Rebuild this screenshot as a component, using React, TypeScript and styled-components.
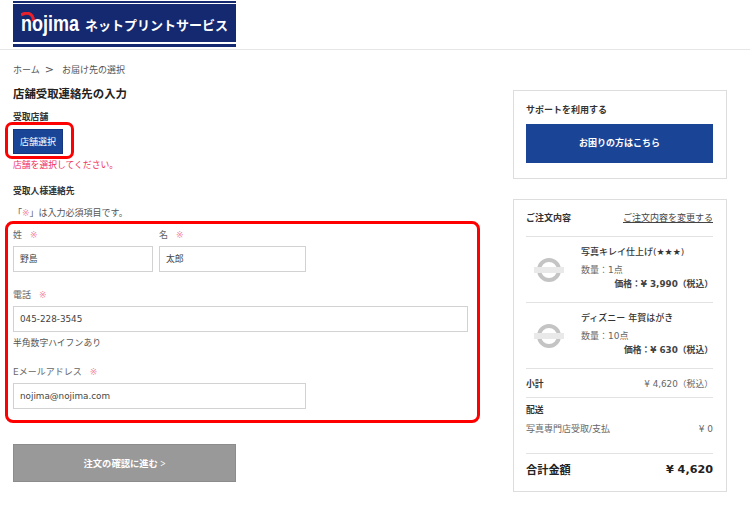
import React from 'react';
import styled, { createGlobalStyle } from 'styled-components';

const SANS = `'DejaVu Sans', 'Noto Sans CJK JP', sans-serif`;

const GlobalStyle = createGlobalStyle`
  html, body {
    margin: 0;
    padding: 0;
    background: #fff;
  }
  body {
    font-family: ${SANS};
    color: #444;
  }
  * {
    box-sizing: border-box;
  }
`;

interface IOrderItem {
  name: string;
  quantity: string;
  price: string;
}

const items: IOrderItem[] = [
  { name: '写真キレイ仕上げ(★★★)', quantity: '数量：1点', price: '価格：¥ 3,990（税込）' },
  { name: 'ディズニー 年賀はがき', quantity: '数量：10点', price: '価格：¥ 630（税込）' },
];

function NoImage() {
  return (
    <svg width="32" height="26" viewBox="0 0 32 26">
      <circle cx="16" cy="13" r="10" fill="none" stroke="#c4c4c4" strokeWidth="4" />
      <rect x="1" y="10" width="30" height="6" fill="#e9e9e9" />
    </svg>
  );
}

function Logo() {
  return (
    <LogoBox>
      <LogoMark>
        <svg width="15" height="10" viewBox="0 0 15 10">
          <path d="M0 3 C5 0 12 0 12.5 9" fill="none" stroke="#e8202a" strokeWidth="3" />
        </svg>
      </LogoMark>
      <LogoName>nojima</LogoName>
      <LogoService>ネットプリントサービス</LogoService>
    </LogoBox>
  );
}

export default function App() {
  return (
    <>
      <GlobalStyle />
      <Header>
        <Logo />
      </Header>
      <Page>
        <Main>
          <Breadcrumb>
            <span>ホーム</span>
            <BreadcrumbSep>&gt;</BreadcrumbSep>
            <span>お届け先の選択</span>
          </Breadcrumb>
          <PageTitle>店舗受取連絡先の入力</PageTitle>
          <SectionTitle>受取店舗</SectionTitle>
          <StoreButtonWrap>
            <StoreButton>店舗選択</StoreButton>
          </StoreButtonWrap>
          <ErrorText>店舗を選択してください。</ErrorText>
          <ContactTitle>受取人様連絡先</ContactTitle>
          <Notice>
            「<Required>※</Required>」は入力必須項目です。
          </Notice>
          <FormArea>
            <NameRow>
              <Field>
                <FieldLabel>
                  姓<Required>※</Required>
                </FieldLabel>
                <TextBox $width={140}>野島</TextBox>
              </Field>
              <Field>
                <FieldLabel>
                  名<Required>※</Required>
                </FieldLabel>
                <TextBox $width={147}>太郎</TextBox>
              </Field>
            </NameRow>
            <Field>
              <FieldLabel>
                電話<Required>※</Required>
              </FieldLabel>
              <TextBox $width={455}>045-228-3545</TextBox>
              <Hint>半角数字ハイフンあり</Hint>
            </Field>
            <EmailField>
              <FieldLabel>
                Eメールアドレス<Required>※</Required>
              </FieldLabel>
              <TextBox $width={293}>nojima@nojima.com</TextBox>
            </EmailField>
          </FormArea>
          <NextButton>注文の確認に進む &gt;</NextButton>
        </Main>
        <Side>
          <SupportCard>
            <SupportTitle>サポートを利用する</SupportTitle>
            <SupportButton>お困りの方はこちら</SupportButton>
          </SupportCard>
          <OrderCard>
            <OrderHead>
              <OrderHeadTitle>ご注文内容</OrderHeadTitle>
              <ChangeLink>ご注文内容を変更する</ChangeLink>
            </OrderHead>
            {items.map((item) => (
              <ItemRow key={item.name}>
                <ItemThumb>
                  <NoImage />
                </ItemThumb>
                <ItemBody>
                  <ItemName>{item.name}</ItemName>
                  <ItemQuantity>{item.quantity}</ItemQuantity>
                  <ItemPrice>{item.price}</ItemPrice>
                </ItemBody>
              </ItemRow>
            ))}
            <SubtotalRow>
              <SummaryLabel>小計</SummaryLabel>
              <span>¥ 4,620（税込）</span>
            </SubtotalRow>
            <ShippingBlock>
              <SummaryLabel>配送</SummaryLabel>
              <ShippingRow>
                <span>写真専門店受取/支払</span>
                <span>¥ 0</span>
              </ShippingRow>
            </ShippingBlock>
            <TotalRow>
              <span>合計金額</span>
              <span>¥ 4,620</span>
            </TotalRow>
          </OrderCard>
        </Side>
      </Page>
    </>
  );
}

const Header = styled.header`
  height: 50px;
  padding: 1px 0 0 13px;
  border-bottom: 1px solid #e6e6e6;
`;

const LogoBox = styled.div`
  position: relative;
  display: flex;
  align-items: center;
  width: 223px;
  height: 46px;
  padding-left: 8px;
  background: linear-gradient(
    #14296f 0 2px,
    #fff 2px 3px,
    #14296f 3px 41px,
    #fff 41px 43px,
    #14296f 43px
  );
  color: #fff;
`;

const LogoMark = styled.span`
  position: absolute;
  left: 8px;
  top: 11px;
  line-height: 0;
`;

const LogoName = styled.span`
  display: inline-block;
  width: 64px;
  font-family: 'Liberation Sans', sans-serif;
  font-size: 18px;
  font-weight: 700;
  transform: scaleY(1.2);
`;

const LogoService = styled.span`
  font-family: 'Noto Sans CJK JP', sans-serif;
  font-size: 13px;
  font-weight: 700;
  white-space: nowrap;
`;

const Page = styled.div`
  display: flex;
  justify-content: space-between;
  padding: 0 23px 0 13px;
`;

const Main = styled.main`
  width: 455px;
`;

const Breadcrumb = styled.nav`
  display: flex;
  align-items: center;
  height: 14px;
  margin-top: 12px;
  font-size: 9px;
  color: #555;
`;

const BreadcrumbSep = styled.span`
  margin: 0 8px 0 5px;
  font-size: 11px;
`;

const PageTitle = styled.h1`
  height: 16px;
  margin: 10px 0 0;
  font-size: 11.4px;
  line-height: 16px;
  font-weight: 700;
  color: #222;
`;

const SectionTitle = styled.h2`
  height: 12px;
  margin: 9px 0 0;
  font-size: 8.8px;
  line-height: 12px;
  font-weight: 700;
  color: #333;
`;

const StoreButtonWrap = styled.div`
  position: relative;
  width: 50px;
  margin-top: 6px;

  &::before {
    content: '';
    position: absolute;
    inset: -7px -11px -5px -8px;
    border: 3px solid #ff0000;
    border-radius: 7px;
  }
`;

const StoreButton = styled.button`
  display: block;
  width: 50px;
  height: 25px;
  padding: 0;
  border: 1px solid #15367f;
  background: #1a4597;
  color: #fff;
  font-family: ${SANS};
  font-size: 9px;
`;

const ErrorText = styled.p`
  height: 12px;
  margin: 5px 0 0;
  font-size: 8.8px;
  line-height: 12px;
  color: #f0305a;
`;

const ContactTitle = styled.h2`
  height: 12px;
  margin: 14px 0 0;
  font-size: 8.8px;
  line-height: 12px;
  font-weight: 700;
  color: #333;
`;

const Notice = styled.p`
  height: 12px;
  margin: 10px 0 0;
  font-size: 9px;
  line-height: 12px;
  color: #555;
`;

const Required = styled.span`
  color: #f48aa4;
`;

const FormArea = styled.section`
  position: relative;
  margin-top: 9px;

  &::before {
    content: '';
    position: absolute;
    inset: -7px -12px -14px -8px;
    border: 3px solid #ff0000;
    border-radius: 8px;
    pointer-events: none;
  }
`;

const NameRow = styled.div`
  display: flex;
  gap: 6px;
  margin-bottom: 16px;
`;

const Field = styled.div`
  display: flex;
  flex-direction: column;
`;

const EmailField = styled(Field)`
  margin-top: 16px;
`;

const FieldLabel = styled.label`
  display: block;
  height: 14px;
  margin-bottom: 4px;
  font-size: 9px;
  line-height: 14px;
  color: #666;

  ${Required} {
    margin-left: 8px;
  }
`;

const TextBox = styled.div<{ $width: number }>`
  width: ${(p) => p.$width}px;
  height: 26px;
  padding-left: 6px;
  border: 1px solid #d2d2d2;
  font-size: 8.8px;
  line-height: 24px;
  color: #444;
`;

const Hint = styled.p`
  height: 12px;
  margin: 5px 0 0;
  font-size: 8.8px;
  line-height: 12px;
  color: #555;
`;

const NextButton = styled.button`
  display: block;
  width: 223px;
  height: 38px;
  margin-top: 35px;
  padding: 0;
  border: 1px solid #8c8c8c;
  background: #999;
  color: #fff;
  font-family: 'Liberation Serif', 'Noto Sans CJK JP', serif;
  font-size: 9.3px;
  font-weight: 700;
`;

const Side = styled.aside`
  width: 214px;
  padding-top: 40px;
`;

const Card = styled.section`
  border: 1px solid #ddd;
  padding: 0 13px 0 12px;
`;

const SupportCard = styled(Card)`
  height: 89px;
`;

const SupportTitle = styled.h3`
  height: 12px;
  margin: 13px 0 0;
  font-size: 9px;
  line-height: 12px;
  font-weight: 700;
  color: #333;
`;

const SupportButton = styled.button`
  display: block;
  width: 100%;
  height: 39px;
  margin-top: 8px;
  padding: 0 0 3px;
  border: 0;
  background: #1a4597;
  color: #fff;
  font-family: ${SANS};
  font-size: 9px;
  font-weight: 700;
`;

const OrderCard = styled(Card)`
  height: 293px;
  margin-top: 20px;
`;

const OrderHead = styled.div`
  display: flex;
  justify-content: space-between;
  align-items: center;
  height: 37px;
  padding-bottom: 1px;
  border-bottom: 1px solid #e2e2e2;
`;

const OrderHeadTitle = styled.h3`
  margin: 0;
  font-size: 9px;
  font-weight: 700;
  color: #333;
`;

const ChangeLink = styled.a`
  font-size: 9px;
  color: #444;
  text-decoration: underline;
`;

const ItemRow = styled.div`
  display: flex;
  height: 66px;
  border-bottom: 1px solid #e2e2e2;
`;

const ItemThumb = styled.div`
  display: flex;
  align-items: center;
  justify-content: center;
  width: 55px;
  padding-right: 9px;
  flex-shrink: 0;
`;

const ItemBody = styled.div`
  flex: 1;
  padding-top: 9px;
`;

const ItemName = styled.div`
  height: 12px;
  font-size: 9px;
  line-height: 12px;
  font-weight: 500;
  color: #333;
`;

const ItemQuantity = styled.div`
  height: 12px;
  margin-top: 6px;
  font-size: 9px;
  line-height: 12px;
  color: #666;
`;

const ItemPrice = styled.div`
  height: 12px;
  margin-top: 2px;
  text-align: right;
  font-size: 8.8px;
  line-height: 12px;
  font-weight: 700;
  color: #444;
`;

const SubtotalRow = styled.div`
  display: flex;
  justify-content: space-between;
  align-items: center;
  height: 29px;
  border-bottom: 1px solid #e2e2e2;
  font-size: 8.8px;
  color: #666;
`;

const SummaryLabel = styled.span`
  font-size: 8.8px;
  font-weight: 700;
  color: #333;
`;

const ShippingBlock = styled.div`
  height: 56px;
  padding-top: 6px;
  border-bottom: 1px solid #e2e2e2;
  font-size: 8.8px;
  line-height: 12px;
`;

const ShippingRow = styled.div`
  display: flex;
  justify-content: space-between;
  margin-top: 7px;
  font-size: 9px;
  line-height: 12px;
  color: #666;
`;

const TotalRow = styled.div`
  display: flex;
  justify-content: space-between;
  align-items: center;
  height: 30px;
  font-size: 11.2px;
  font-weight: 700;
  color: #222;
`;
